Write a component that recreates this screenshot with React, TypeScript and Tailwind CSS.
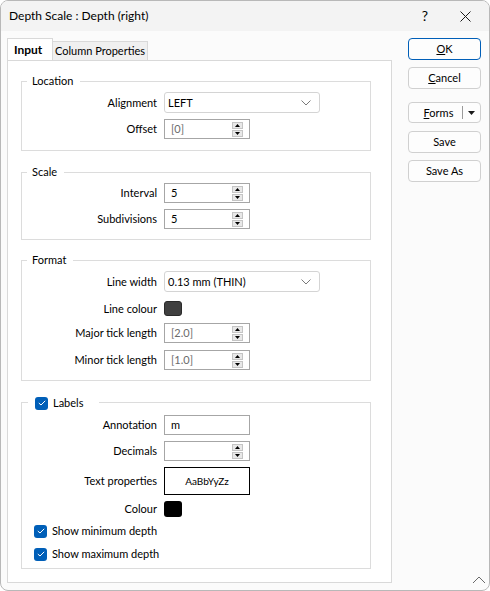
import React from 'react';

const font = { fontFamily: 'Lato, "Noto Sans", sans-serif' };

const SpinButtons = () => (
  <div className="flex flex-col gap-[1px] mr-[6px]">
    <div className="w-[11px] h-[7px] bg-[#e8e8e8] border border-[#c4c4c4] flex items-center justify-center">
      <svg width="5" height="3" viewBox="0 0 5 3"><path d="M2.5 0 L5 3 L0 3 Z" fill="#000" /></svg>
    </div>
    <div className="w-[11px] h-[7px] bg-[#e8e8e8] border border-[#c4c4c4] flex items-center justify-center">
      <svg width="5" height="3" viewBox="0 0 5 3"><path d="M0 0 L5 0 L2.5 3 Z" fill="#000" /></svg>
    </div>
  </div>
);

const Spinner = ({ value, muted }: { value: string; muted?: boolean }) => (
  <div className="w-[86px] h-[20px] border border-[#a6a6a6] bg-white flex items-center">
    <span className={`flex-1 pl-[6px] ${muted ? 'text-[#6b6b6b]' : 'text-black'}`}>{value}</span>
    <SpinButtons />
  </div>
);

const Select = ({ value }: { value: string }) => (
  <div className="w-[156px] h-[21px] border border-[#d4d4d4] rounded-[3px] bg-white flex items-center justify-between pl-[3px] pr-[8px]">
    <span>{value}</span>
    <svg width="10" height="6" viewBox="0 0 10 6"><path d="M0.5 0.5 L5 5 L9.5 0.5" fill="none" stroke="#7a7a7a" strokeWidth="1" /></svg>
  </div>
);

const Row = ({ label, children, className = '' }: { label: string; children: React.ReactNode; className?: string }) => (
  <div className={`flex items-center ${className}`}>
    <div className="w-[135px] text-right">{label}</div>
    <div className="ml-[7px]">{children}</div>
  </div>
);

const Check = () => (
  <div className="w-[13px] h-[13px] rounded-[3px] bg-[#005fb8] flex items-center justify-center shrink-0">
    <svg width="8" height="6" viewBox="0 0 8 6"><path d="M0.8 3 L3 5 L7.2 0.8" fill="none" stroke="#fff" strokeWidth="1" /></svg>
  </div>
);

const Group = ({ legend, children, className = '' }: { legend: React.ReactNode; children: React.ReactNode; className?: string }) => (
  <fieldset className={`border border-[#dcdcdc] ${className}`}>
    <legend className="ml-[5px] pl-[5px] pr-[7px] leading-[16px] h-[16px]">{legend}</legend>
    {children}
  </fieldset>
);

const Button = ({ children, primary }: { children: React.ReactNode; primary?: boolean }) => (
  <div className={`w-[73px] h-[22px] rounded-[4px] border bg-[#fdfdfd] flex items-center justify-center ${primary ? 'border-[#005fb8]' : 'border-[#d0d0d0]'}`}>
    {children}
  </div>
);

export default function App() {
  return (
    <div style={font} className="w-[490px] h-[591px] text-[11px] leading-[14px] text-black">
      <div className="w-full h-full border border-[#b8b8b8] rounded-[8px] overflow-hidden flex flex-col bg-[#fbfbfb]">
        <div className="h-[30px] bg-[#f3f3f3] flex items-center pl-[8px] shrink-0 text-[12px]">
          <span className="flex-1">Depth Scale : Depth (right)</span>
          <span className="w-[20px] text-center text-[14px] mr-[25px]">?</span>
          <svg width="11" height="11" viewBox="0 0 11 11" className="mr-[18px]">
            <path d="M0.5 0.5 L10.5 10.5 M10.5 0.5 L0.5 10.5" stroke="#1a1a1a" strokeWidth="1" />
          </svg>
        </div>
        <div className="flex-1 flex relative">
          <div className="w-[391px] pl-[6px] pt-[7px] pb-[7px] flex flex-col">
            <div className="flex items-end h-[22px]">
              <div className="h-[22px] w-[46px] border border-b-0 border-[#d9d9d9] bg-white flex items-center pl-[6px] font-bold text-[12px]">Input</div>
              <div className="h-[19px] w-[95px] border border-l-0 border-b-0 border-[#d9d9d9] bg-[#f0f0f0] flex items-center justify-center whitespace-nowrap">Column Properties</div>
            </div>
            <div className="flex-1 border border-[#d9d9d9] bg-white pl-[13px] pr-[20px] pt-[12px]">
              <Group legend="Location">
                <Row label="Alignment" className="mt-[3px]"><Select value="LEFT" /></Row>
                <Row label="Offset" className="mt-[6px] mb-[11px]"><Spinner value="[0]" muted /></Row>
              </Group>
              <Group legend="Scale" className="mt-[13px]">
                <Row label="Interval" className="mt-[3px]"><Spinner value="5" /></Row>
                <Row label="Subdivisions" className="mt-[6px] mb-[10px]"><Spinner value="5" /></Row>
              </Group>
              <Group legend="Format" className="mt-[12px]">
                <Row label="Line width" className="mt-[3px]"><Select value="0.13 mm (THIN)" /></Row>
                <Row label="Line colour" className="mt-[9px]">
                  <div className="w-[18px] h-[15px] rounded-[3px] bg-[#404040] border border-[#2a2a2a]" />
                </Row>
                <Row label="Major tick length" className="mt-[7px]"><Spinner value="[2.0]" muted /></Row>
                <Row label="Minor tick length" className="mt-[7px] mb-[10px]"><Spinner value="[1.0]" muted /></Row>
              </Group>
              <fieldset className="border border-[#dcdcdc] mt-[13px]">
                <legend className="ml-[6px] pl-[7px] pr-[16px] h-[16px]">
                  <div className="flex items-center gap-[5px] h-[16px] pt-[2px]">
                    <Check />
                    <span>Labels</span>
                  </div>
                </legend>
                <Row label="Annotation" className="mt-[5px]">
                  <div className="w-[86px] h-[20px] border border-[#a6a6a6] bg-white flex items-center pl-[6px]">m</div>
                </Row>
                <Row label="Decimals" className="mt-[6px]"><Spinner value="" /></Row>
                <Row label="Text properties" className="mt-[6px]">
                  <div className="w-[86px] h-[28px] border-[1.5px] border-black bg-white flex items-center justify-center text-[10px]">AaBbYyZz</div>
                </Row>
                <Row label="Colour" className="mt-[6px]">
                  <div className="w-[18px] h-[16px] rounded-[3px] bg-black" />
                </Row>
                <div className="flex items-center gap-[5px] ml-[12px] mt-[6px] h-[16px]">
                  <Check />
                  <span>Show minimum depth</span>
                </div>
                <div className="flex items-center gap-[5px] ml-[12px] mt-[7px] h-[16px] mb-[6px]">
                  <Check />
                  <span>Show maximum depth</span>
                </div>
              </fieldset>
            </div>
          </div>
          <div className="pl-[16px] pt-[7px] flex flex-col">
            <Button primary><span><u>O</u>K</span></Button>
            <div className="mt-[7px]"><Button><span><u>C</u>ancel</span></Button></div>
            <div className="mt-[13px] w-[73px] h-[21px] rounded-[4px] border border-[#d0d0d0] bg-[#fdfdfd] flex items-center">
              <span className="flex-1 text-center pl-[6px]"><u>F</u>orms</span>
              <div className="w-[1px] h-[13px] bg-[#9a9a9a]" />
              <div className="w-[17px] flex justify-center">
                <svg width="7" height="4" viewBox="0 0 7 4"><path d="M0 0 L7 0 L3.5 4 Z" fill="#1a1a1a" /></svg>
              </div>
            </div>
            <div className="mt-[8px]"><Button>Save</Button></div>
            <div className="mt-[7px]"><Button>Save As</Button></div>
          </div>
          <svg width="14" height="8" viewBox="0 0 14 8" className="absolute right-[3px] bottom-[6px]">
            <path d="M1 7 L7 1 L13 7" fill="none" stroke="#6a6a6a" strokeWidth="1" />
          </svg>
        </div>
      </div>
    </div>
  );
}
